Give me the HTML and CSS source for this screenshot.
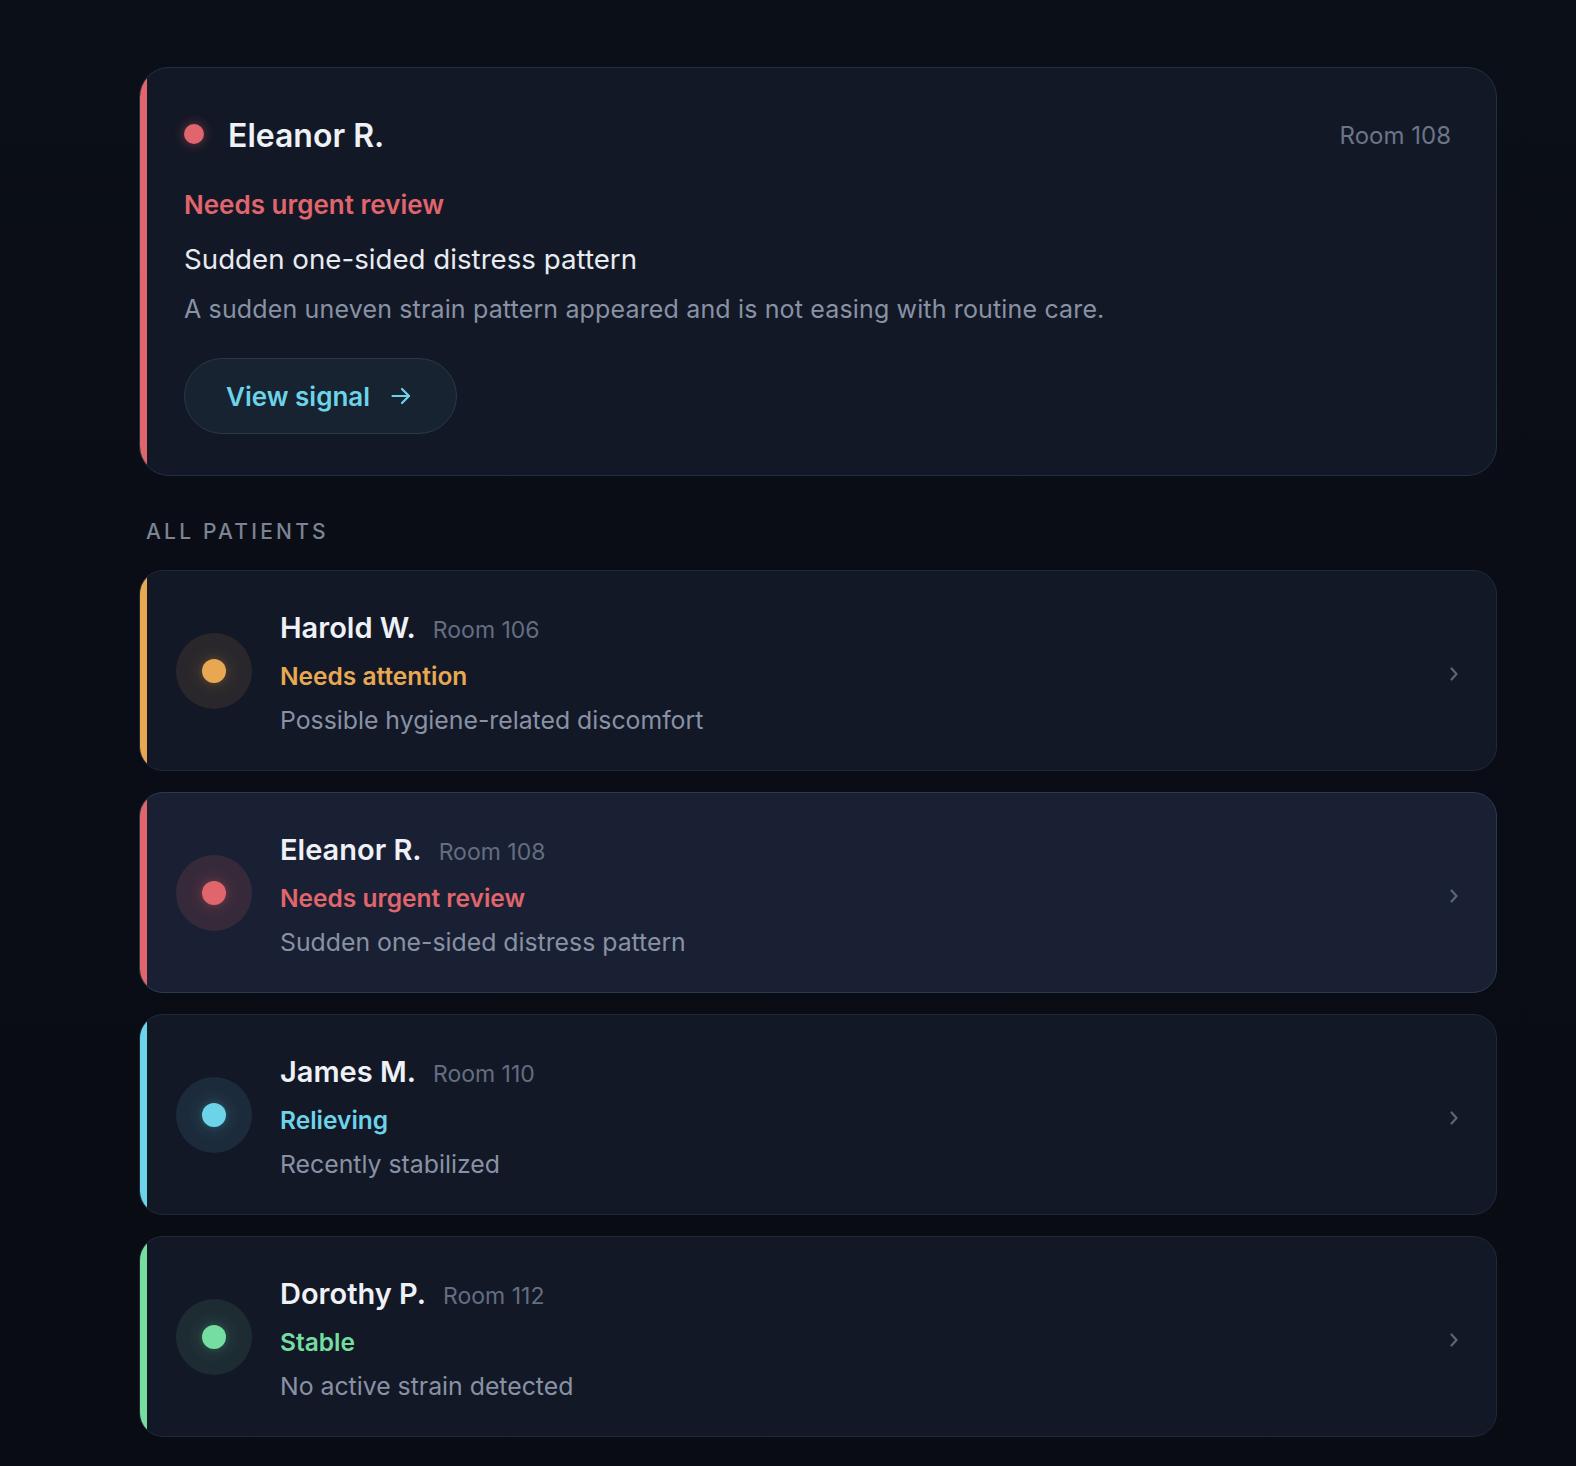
FILE: index.html
```html
<!DOCTYPE html>
<html lang="en">
<head>
<meta charset="utf-8">
<title>Patients</title>
<link rel="stylesheet" href="styles.css">
</head>
<body>
<main class="page">
  <section class="alert-card">
    <div class="alert-head">
      <span class="alert-dot"></span>
      <h1 class="alert-name">Eleanor R.</h1>
      <span class="alert-room">Room 108</span>
    </div>
    <div class="alert-status">Needs urgent review</div>
    <div class="alert-title">Sudden one-sided distress pattern</div>
    <p class="alert-desc">A sudden uneven strain pattern appeared and is not easing with routine care.</p>
    <button class="signal-btn" type="button">
      <span>View signal</span>
      <svg class="arrow" width="22" height="22" viewBox="0 0 22 22" fill="none" stroke="currentColor" stroke-width="2.2" stroke-linecap="round" stroke-linejoin="round"><path d="M2.5 11h16.5"/><path d="M12 4l7 7-7 7"/></svg>
    </button>
  </section>

  <h2 class="section-label">ALL PATIENTS</h2>

  <ul class="patient-list">
    <li class="patient amber">
      <div class="halo"><span class="dot"></span></div>
      <div class="info">
        <div class="name-row"><span class="name">Harold W.</span><span class="room">Room 106</span></div>
        <div class="status">Needs attention</div>
        <div class="desc">Possible hygiene-related discomfort</div>
      </div>
      <svg class="chev" width="10" height="16" viewBox="0 0 10 16" fill="none" stroke="currentColor" stroke-width="2.2" stroke-linecap="round" stroke-linejoin="round"><path d="M2.5 2.5L7.5 8l-5 5.5"/></svg>
    </li>
    <li class="patient red selected">
      <div class="halo"><span class="dot"></span></div>
      <div class="info">
        <div class="name-row"><span class="name">Eleanor R.</span><span class="room">Room 108</span></div>
        <div class="status">Needs urgent review</div>
        <div class="desc">Sudden one-sided distress pattern</div>
      </div>
      <svg class="chev" width="10" height="16" viewBox="0 0 10 16" fill="none" stroke="currentColor" stroke-width="2.2" stroke-linecap="round" stroke-linejoin="round"><path d="M2.5 2.5L7.5 8l-5 5.5"/></svg>
    </li>
    <li class="patient cyan">
      <div class="halo"><span class="dot"></span></div>
      <div class="info">
        <div class="name-row"><span class="name">James M.</span><span class="room">Room 110</span></div>
        <div class="status">Relieving</div>
        <div class="desc">Recently stabilized</div>
      </div>
      <svg class="chev" width="10" height="16" viewBox="0 0 10 16" fill="none" stroke="currentColor" stroke-width="2.2" stroke-linecap="round" stroke-linejoin="round"><path d="M2.5 2.5L7.5 8l-5 5.5"/></svg>
    </li>
    <li class="patient green">
      <div class="halo"><span class="dot"></span></div>
      <div class="info">
        <div class="name-row"><span class="name">Dorothy P.</span><span class="room">Room 112</span></div>
        <div class="status">Stable</div>
        <div class="desc">No active strain detected</div>
      </div>
      <svg class="chev" width="10" height="16" viewBox="0 0 10 16" fill="none" stroke="currentColor" stroke-width="2.2" stroke-linecap="round" stroke-linejoin="round"><path d="M2.5 2.5L7.5 8l-5 5.5"/></svg>
    </li>
  </ul>
</main>
</body>
</html>
```

FILE: styles.css
```css
* { box-sizing: border-box; }

html, body {
  margin: 0;
  padding: 0;
}

body {
  min-height: 1466px;
  background: linear-gradient(180deg, #0b0f17 0%, #0a0d15 40%, #090c13 100%);
  font-family: Inter, "Noto Sans", "Liberation Sans", sans-serif;
  color: #eef1f6;
}

.page {
  width: 1358px;
  margin-left: 139px;
  padding-top: 67px;
}

/* ---------- alert card ---------- */
.alert-card {
  position: relative;
  overflow: hidden;
  background: #131826;
  border: 1px solid #1f3245;
  border-radius: 30px;
  padding: 48px 45px 41px 44px;
}

.alert-card::before {
  content: "";
  position: absolute;
  left: 0;
  top: 0;
  bottom: 0;
  width: 7px;
  background: #e0656d;
}

.alert-head {
  display: flex;
  align-items: center;
  height: 40px;
}

.alert-dot {
  width: 20px;
  height: 20px;
  border-radius: 50%;
  background: #e0656d;
  box-shadow: 0 0 12px rgba(224, 101, 109, 0.45);
  margin: -4px 24px 0 0;
  flex: none;
}

.alert-name {
  margin: 0;
  font-size: 32px;
  line-height: 40px;
  font-weight: 600;
  color: #eef1f6;
}

.alert-room {
  margin-left: auto;
  font-size: 24px;
  line-height: 40px;
  color: #6a7588;
}

.alert-status {
  margin-top: 33px;
  font-size: 26px;
  line-height: 32px;
  font-weight: 600;
  color: #e0656d;
}

.alert-title {
  margin-top: 20px;
  font-size: 27.7px;
  line-height: 36px;
  color: #e8ebf0;
}

.alert-desc {
  margin: 16px 0 0;
  font-size: 25px;
  line-height: 32px;
  letter-spacing: 0.15px;
  color: #8892a4;
}

.signal-btn {
  margin-top: 33px;
  height: 76px;
  display: inline-flex;
  align-items: center;
  gap: 20px;
  padding: 0 44px 0 41px;
  border-radius: 38px;
  background: #172331;
  border: 1px solid #28394b;
  color: #6dd3e8;
  font-family: inherit;
  font-size: 26px;
  font-weight: 600;
  cursor: pointer;
}

.signal-btn .arrow { flex: none; }

/* ---------- section label ---------- */
.section-label {
  margin: 42px 0 0;
  padding-left: 7px;
  font-size: 21px;
  line-height: 28px;
  font-weight: 500;
  letter-spacing: 3.2px;
  color: #7a8494;
}

/* ---------- patient list ---------- */
.patient-list {
  list-style: none;
  margin: 24px 0 0;
  padding: 0 0 36px;
  display: flex;
  flex-direction: column;
  gap: 21px;
}

.patient {
  --c: #e8a852;
  --halo: rgba(232, 168, 82, 0.11);
  position: relative;
  overflow: hidden;
  height: 201px;
  display: flex;
  align-items: center;
  background: #131827;
  border: 1px solid #1e293a;
  border-radius: 24px;
  padding: 0 37px 0 36px;
}

.patient::before {
  content: "";
  position: absolute;
  left: 0;
  top: 0;
  bottom: 0;
  width: 7px;
  background: var(--c);
}

.patient.selected {
  background: #1a2033;
  border-color: #2a3b4e;
}

.patient.amber { --c: #e8a852; --halo: rgba(232, 168, 82, 0.11); }
.patient.red   { --c: #e0656d; --halo: rgba(224, 101, 109, 0.14); }
.patient.cyan  { --c: #6dd3e8; --halo: rgba(109, 211, 232, 0.10); }
.patient.green { --c: #74dd9f; --halo: rgba(116, 221, 159, 0.10); }

.halo {
  flex: none;
  width: 76px;
  height: 76px;
  border-radius: 50%;
  background: var(--halo);
  display: flex;
  align-items: center;
  justify-content: center;
  position: relative;
}

.halo::before {
  content: "";
  position: absolute;
  inset: 12px;
  border-radius: 50%;
  background: radial-gradient(circle, var(--halo) 0%, transparent 70%);
}

.dot {
  width: 24px;
  height: 24px;
  border-radius: 50%;
  background: var(--c);
  box-shadow: 0 0 10px var(--halo), 0 0 6px var(--halo);
  position: relative;
}

.info {
  margin-left: 28px;
  padding-top: 8px;
  display: flex;
  flex-direction: column;
}

.name-row {
  display: flex;
  align-items: baseline;
  gap: 17px;
  line-height: 40px;
}

.name {
  font-size: 29px;
  font-weight: 600;
  color: #eef1f6;
}

.room {
  font-size: 23px;
  color: #636e81;
}

.status {
  margin-top: 4px;
  font-size: 24.5px;
  line-height: 44px;
  font-weight: 600;
  color: var(--c);
}

.desc {
  font-size: 24.8px;
  line-height: 44px;
  color: #8892a4;
}

.chev {
  flex: none;
  margin-left: auto;
  margin-top: 6px;
  color: #5b6579;
}
```
